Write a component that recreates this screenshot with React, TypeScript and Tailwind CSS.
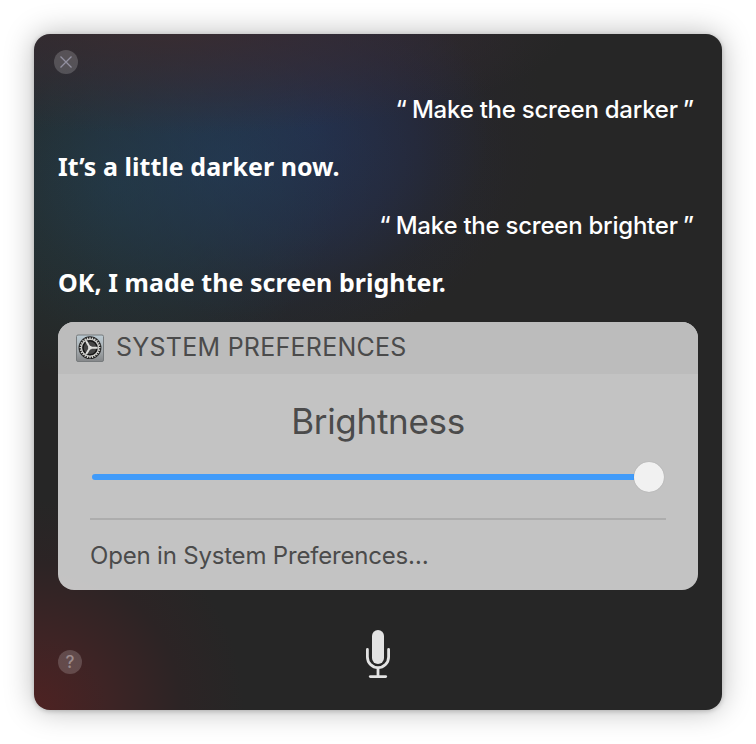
interface Message {
  from: "user" | "siri";
  text: string;
}

const messages: Message[] = [
  { from: "user", text: "Make the screen darker" },
  { from: "siri", text: "It’s a little darker now." },
  { from: "user", text: "Make the screen brighter" },
  { from: "siri", text: "OK, I made the screen brighter." },
];

const teeth = Array.from({ length: 24 }, (_, i) => i * 15);

const GearIcon = () => (
  <svg viewBox="0 0 28 28" className="size-7 shrink-0">
    <defs>
      <linearGradient id="plate" x1="0" y1="0" x2="0" y2="1">
        <stop offset="0" stopColor="#bccbd3" />
        <stop offset="0.5" stopColor="#a9b0b4" />
        <stop offset="1" stopColor="#858789" />
      </linearGradient>
    </defs>
    <rect x="0.5" y="1" width="27" height="26.5" rx="1.5" fill="url(#plate)" stroke="#777b7d" />
    <circle cx="14" cy="13.7" r="11.4" fill="#1f1f1f" />
    {teeth.map((angle) => (
      <path
        key={angle}
        d="M14 3.2v2.6"
        stroke="#d8d8d4"
        strokeWidth="1.3"
        transform={`rotate(${angle} 14 13.7)`}
      />
    ))}
    <circle cx="14" cy="13.7" r="8.5" fill="#2c2c2c" stroke="#c9c9c6" strokeWidth="1.4" />
    <circle cx="14" cy="13.7" r="6.9" fill="#454545" stroke="#151515" strokeWidth="1.2" />
    <path
      d="M14 13.7H21.7M14 13.7L10.1 7.1M14 13.7L10.1 20.3"
      stroke="#dededb"
      strokeWidth="2"
    />
    <circle cx="14" cy="13.7" r="1.9" fill="#dededb" />
  </svg>
);

const MicIcon = () => (
  <svg viewBox="0 0 26 48" className="h-12 w-[26px]" fill="none" stroke="#e3e3e3">
    <rect x="7" y="0" width="12" height="34" rx="6" fill="#e3e3e3" stroke="none" />
    <path d="M2.4 19.5V27a10.6 10.6 0 0 0 21.2 0V19.5" strokeWidth="2.8" strokeLinecap="round" />
    <path d="M13 38V46" strokeWidth="2.8" />
    <path d="M5.3 46.6H20.7" strokeWidth="2.8" strokeLinecap="round" />
  </svg>
);

const MessageRow = ({ from, text }: Message) =>
  from === "user" ? (
    <p className="flex h-[58px] items-center justify-end gap-[5px] pt-0.5 pr-1 text-2xl font-medium whitespace-nowrap">
      <span>“</span>
      <span className="tracking-[-0.24px]">{text}</span>
      <span>”</span>
    </p>
  ) : (
    <p className="flex h-[58px] items-center font-['Noto_Sans',sans-serif] text-[25px] font-bold tracking-[0.04px] whitespace-nowrap">
      {text}
    </p>
  );

const PreferencesCard = () => (
  <section className="h-[268px] overflow-hidden rounded-2xl bg-[#cacaca]/96 text-[#4b4b4b]">
    <header className="flex h-[52px] items-center gap-3 bg-[#bcbcbc] pl-[18px]">
      <GearIcon />
      <h2 className="text-[25px] tracking-[0.26px] whitespace-nowrap">SYSTEM PREFERENCES</h2>
    </header>
    <div className="px-8">
      <h3 className="flex h-24 items-center justify-center pb-0.5 text-[35px] tracking-[-0.3px]">
        Brightness
      </h3>
      <div className="flex h-[14px] items-center px-[2px]">
        <div className="h-[6px] grow rounded-l-full bg-[#419bf9]" />
        <div className="size-[30px] shrink-0 rounded-full bg-[#f1f1f1] shadow-[0_0_1px_rgba(0,0,0,0.25)]" />
      </div>
      <div className="mt-[34px] h-[2px] bg-[#adadad]" />
      <a className="flex h-[72px] items-center text-2xl tracking-[-0.19px] whitespace-nowrap">
        Open in System Preferences…
      </a>
    </div>
  </section>
);

export default function App() {
  return (
    <main className="flex h-[744px] w-[756px] items-center justify-center overflow-hidden bg-white font-['Inter',sans-serif]">
      <div className="flex h-[676px] w-[688px] flex-col rounded-2xl bg-[#262626] bg-[radial-gradient(210px_210px_at_0%_100%,#4e2222_0%,#3e2425_35%,#2c2425_70%,#26262600_100%),radial-gradient(400px_110px_at_140px_-10px,#3c2c30e0_0%,#382c3490_50%,#30283000_100%),radial-gradient(280px_210px_at_195px_125px,#223c5aa0_0%,#22385470_40%,#22304430_75%,#22304400_100%),radial-gradient(220px_200px_at_85px_150px,#22464c90_0%,#22404260_50%,#22303000_100%),radial-gradient(240px_210px_at_275px_95px,#242c58a0_0%,#26285068_45%,#28243430_75%,#28243400_100%)] px-6 text-white shadow-[0_0_30px_rgba(0,0,0,0.28),0_1px_5px_rgba(0,0,0,0.22)]">
        <div className="-ml-1 flex h-[46px] items-end pb-[6px]">
          <button className="flex size-6 items-center justify-center rounded-full bg-white/18">
            <svg viewBox="0 0 12 12" className="size-3" stroke="#9290a0" strokeWidth="1.3">
              <path d="M0.5 0.5L11.5 11.5M11.5 0.5L0.5 11.5" />
            </svg>
          </button>
        </div>
        <div className="mb-[10px]">
          {messages.map((message) => (
            <MessageRow key={message.text} {...message} />
          ))}
        </div>
        <PreferencesCard />
        <footer className="grid grow grid-cols-3 items-start pt-10">
          <button className="mt-5 flex size-6 items-center justify-center rounded-full bg-white/18 pt-px text-[17px] font-medium text-[#9c8b8c]">
            ?
          </button>
          <div className="flex justify-center">
            <MicIcon />
          </div>
        </footer>
      </div>
    </main>
  );
}
